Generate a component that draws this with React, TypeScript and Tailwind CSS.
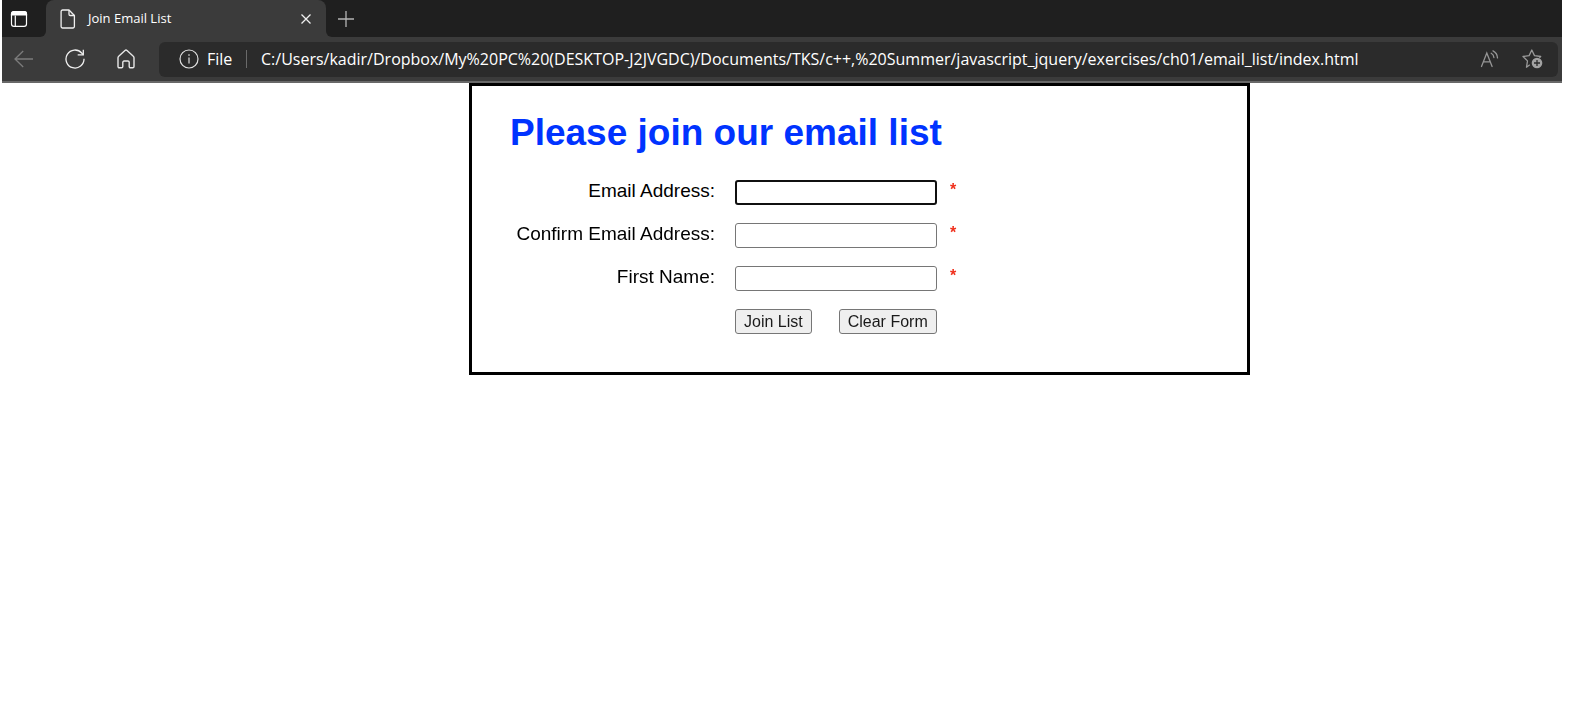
import { useState } from "react";
import type { FormEvent } from "react";

const PAGE_URL =
  "C:/Users/kadir/Dropbox/My%20PC%20(DESKTOP-J2JVGDC)/Documents/TKS/c++,%20Summer/javascript_jquery/exercises/ch01/email_list/index.html";

const FIELDS = [
  { id: "email_1", label: "Email Address:" },
  { id: "email_2", label: "Confirm Email Address:" },
  { id: "first_name", label: "First Name:" },
];

function TabActionsIcon() {
  return (
    <svg width="18" height="18" viewBox="0 0 18 18" fill="none" stroke="#fff" strokeWidth="1.2">
      <rect x="1.5" y="1.7" width="15" height="14.6" rx="2.4" />
      <path d="M1.5 5V4a2.3 2.3 0 0 1 2.3-2.3h10.4A2.3 2.3 0 0 1 16.5 4v1z" fill="#fff" />
      <path d="M5.3 5.5V16" />
    </svg>
  );
}

function PageIcon() {
  return (
    <svg width="16" height="20" viewBox="0 0 16 20" fill="none" stroke="#f0f0f0" strokeWidth="1.3" strokeLinejoin="round">
      <path d="M2.6 1H9l5.400 5.500v11a1.500 1.500 0 0 1-1.500 1.500H2.600a1.500 1.500 0 0 1-1.500-1.500v-15A1.500 1.500 0 0 1 2.600 1z" />
      <path d="M9 1v4.300a1.200 1.200 0 0 0 1.200 1.200h4.200" />
    </svg>
  );
}

function CloseIcon() {
  return (
    <svg width="10" height="10" viewBox="0 0 10 10" stroke="#f0f0f0" strokeWidth="1.3">
      <path d="M.5.5l9 9M9.500.5l-9 9" />
    </svg>
  );
}

function PlusIcon() {
  return (
    <svg width="16" height="16" viewBox="0 0 16 16" stroke="#b4b4b4" strokeWidth="1.3">
      <path d="M0 8h16M8 0v16" />
    </svg>
  );
}

function BackIcon() {
  return (
    <svg width="20" height="18" viewBox="0 0 20 18" fill="none" stroke="#7c7c7c" strokeWidth="1.3">
      <path d="M19 9H1.200M9.200 1L1 9l8.200 8" />
    </svg>
  );
}

function RefreshIcon() {
  return (
    <svg width="20" height="20" viewBox="0 0 20 20" fill="none" stroke="#f0f0f0" strokeWidth="1.3">
      <path d="M19 9.700a9 9 0 1 1-2.300-5.700l1.300 1.500" />
      <path d="M18.300.7v5.200h-5.600" />
    </svg>
  );
}

function HomeIcon() {
  return (
    <svg width="18" height="20" viewBox="0 0 18 20" fill="none" stroke="#e8e8e8" strokeWidth="1.4" strokeLinejoin="round">
      <path d="M1 8.700a2 2 0 0 1 .7-1.500L8 1.500a1.500 1.500 0 0 1 2 0l6.300 5.700a2 2 0 0 1 .7 1.500V17.500a1.300 1.300 0 0 1-1.300 1.300h-2.200a1.300 1.300 0 0 1-1.300-1.300v-4.200a1.300 1.300 0 0 0-1.300-1.300H7.100a1.300 1.300 0 0 0-1.300 1.300v4.200a1.300 1.300 0 0 1-1.300 1.300H2.300A1.300 1.300 0 0 1 1 17.500z" />
    </svg>
  );
}

function InfoIcon() {
  return (
    <svg className="shrink-0" width="20" height="20" viewBox="0 0 20 20" fill="none" stroke="#e0e0e0" strokeWidth="1.2">
      <circle cx="10" cy="10" r="9" />
      <path d="M10 8.500V14.500" />
      <circle cx="10" cy="6" r=".5" fill="#e0e0e0" strokeWidth=".6" />
    </svg>
  );
}

function ReadAloudIcon() {
  return (
    <svg width="20" height="18" viewBox="0 0 20 18" fill="none" stroke="#969696" strokeWidth="1.3" strokeLinecap="round">
      <path d="M1.500 16.500L6.800 3l5.300 13.500M3.400 11.800h6.800" />
      <path d="M11.200 3.300c1.700.9 2.600 2.300 2.700 4.200M13 .9c2.900 1.500 4.400 3.900 4.500 7" />
    </svg>
  );
}

function FavoriteIcon() {
  return (
    <svg width="21" height="20" viewBox="0 0 21 20" fill="none" stroke="#9a9a9a" strokeWidth="1.3" strokeLinejoin="round">
      <path d="M7.800 15.800L4.500 18.200l1-6.300L1 7.500l6.100-.9L9.800 1l2.700 5.600 6.200.9-1.500 1.500" />
      <circle cx="15" cy="14" r="5.300" fill="#a2a2a2" stroke="none" />
      <path d="M15 11v6M12 14h6" stroke="#2b2b2b" />
    </svg>
  );
}

function BrowserChrome() {
  return (
    <header className="border-b-2 border-[#686868] bg-[#3b3b3b] font-['Open_Sans','Noto_Sans',sans-serif] text-white">
      <div className="flex h-[37px] bg-[#3b3b3b]">
        <button type="button" aria-label="Tab actions" className="flex w-11 items-center rounded-br-md bg-[#1f1f1f] pl-2">
          <TabActionsIcon />
        </button>
        <div className="flex w-[280px] bg-[#1f1f1f]">
          <div className="flex flex-1 items-center rounded-t-lg bg-[#3b3b3b] pr-[15px] pl-[14px]">
            <PageIcon />
            <span className="ml-3 flex-1 text-[13px]">Join Email List</span>
            <button type="button" aria-label="Close tab">
              <CloseIcon />
            </button>
          </div>
        </div>
        <div className="flex flex-1 items-center rounded-bl-md bg-[#1f1f1f] pl-3">
          <button type="button" aria-label="New tab">
            <PlusIcon />
          </button>
        </div>
      </div>
      <div className="flex h-11 items-center pr-1 pl-3">
        <nav aria-label="Browser" className="flex w-[145px] shrink-0 items-center">
          <button type="button" aria-label="Back" className="w-[51px]">
            <BackIcon />
          </button>
          <button type="button" aria-label="Refresh" className="w-[52px]">
            <RefreshIcon />
          </button>
          <button type="button" aria-label="Home">
            <HomeIcon />
          </button>
        </nav>
        <div className="flex h-[35px] min-w-0 flex-1 items-center rounded-md bg-[#2b2b2b] pr-[15px] pl-5 text-base">
          <InfoIcon />
          <span className="ml-2 w-[29px]">File</span>
          <span className="mr-[14px] ml-[10px] h-[18px] w-px shrink-0 bg-[#6a6a6a]" />
          <input aria-label="Address" readOnly value={PAGE_URL} className="min-w-0 flex-1 bg-transparent outline-none" />
          <button type="button" aria-label="Read aloud" className="mr-[22px]">
            <ReadAloudIcon />
          </button>
          <button type="button" aria-label="Add to favorites">
            <FavoriteIcon />
          </button>
        </div>
      </div>
    </header>
  );
}

const BUTTON = "h-[25px] rounded-[3px] border border-[#767676] bg-[#efefef] px-2 text-base leading-none text-[#1a1a1a]";

export default function App() {
  const [values, setValues] = useState<Record<string, string>>({});

  const submit = (event: FormEvent) => event.preventDefault();

  return (
    <div className="min-h-screen bg-white pr-2 pl-0.5">
      <BrowserChrome />
      <main className="mr-[20%] ml-[467px] border-[3px] border-black px-[38px] pt-6 pb-[38px] font-['Liberation_Sans',Arial,sans-serif] text-black">
        <h1 className="text-[37px] leading-[46px] font-bold text-[#0033ff]">Please join our email list</h1>
        <form onSubmit={submit} onReset={() => setValues({})} className="mt-6 flex flex-col gap-[18px]">
          {FIELDS.map(({ id, label }, index) => (
            <div key={id} className="flex h-[25px]">
              <label htmlFor={id} className="w-[205px] text-right text-[19px] leading-[22px]">
                {label}
              </label>
              <input
                id={id}
                type="text"
                autoFocus={index === 0}
                value={values[id] ?? ""}
                onChange={(event) => setValues({ ...values, [id]: event.target.value })}
                className="ml-5 w-[202px] rounded-[3px] border border-[#767676] px-1 text-base caret-transparent outline-none focus:border-2 focus:border-[#101010]"
              />
              <span className="ml-[13px] text-base leading-5 font-bold text-[#f0301c]">*</span>
            </div>
          ))}
          <div className="ml-[225px] flex gap-[27px]">
            <button type="submit" className={BUTTON}>
              Join List
            </button>
            <button type="reset" className={BUTTON}>
              Clear Form
            </button>
          </div>
        </form>
      </main>
    </div>
  );
}
